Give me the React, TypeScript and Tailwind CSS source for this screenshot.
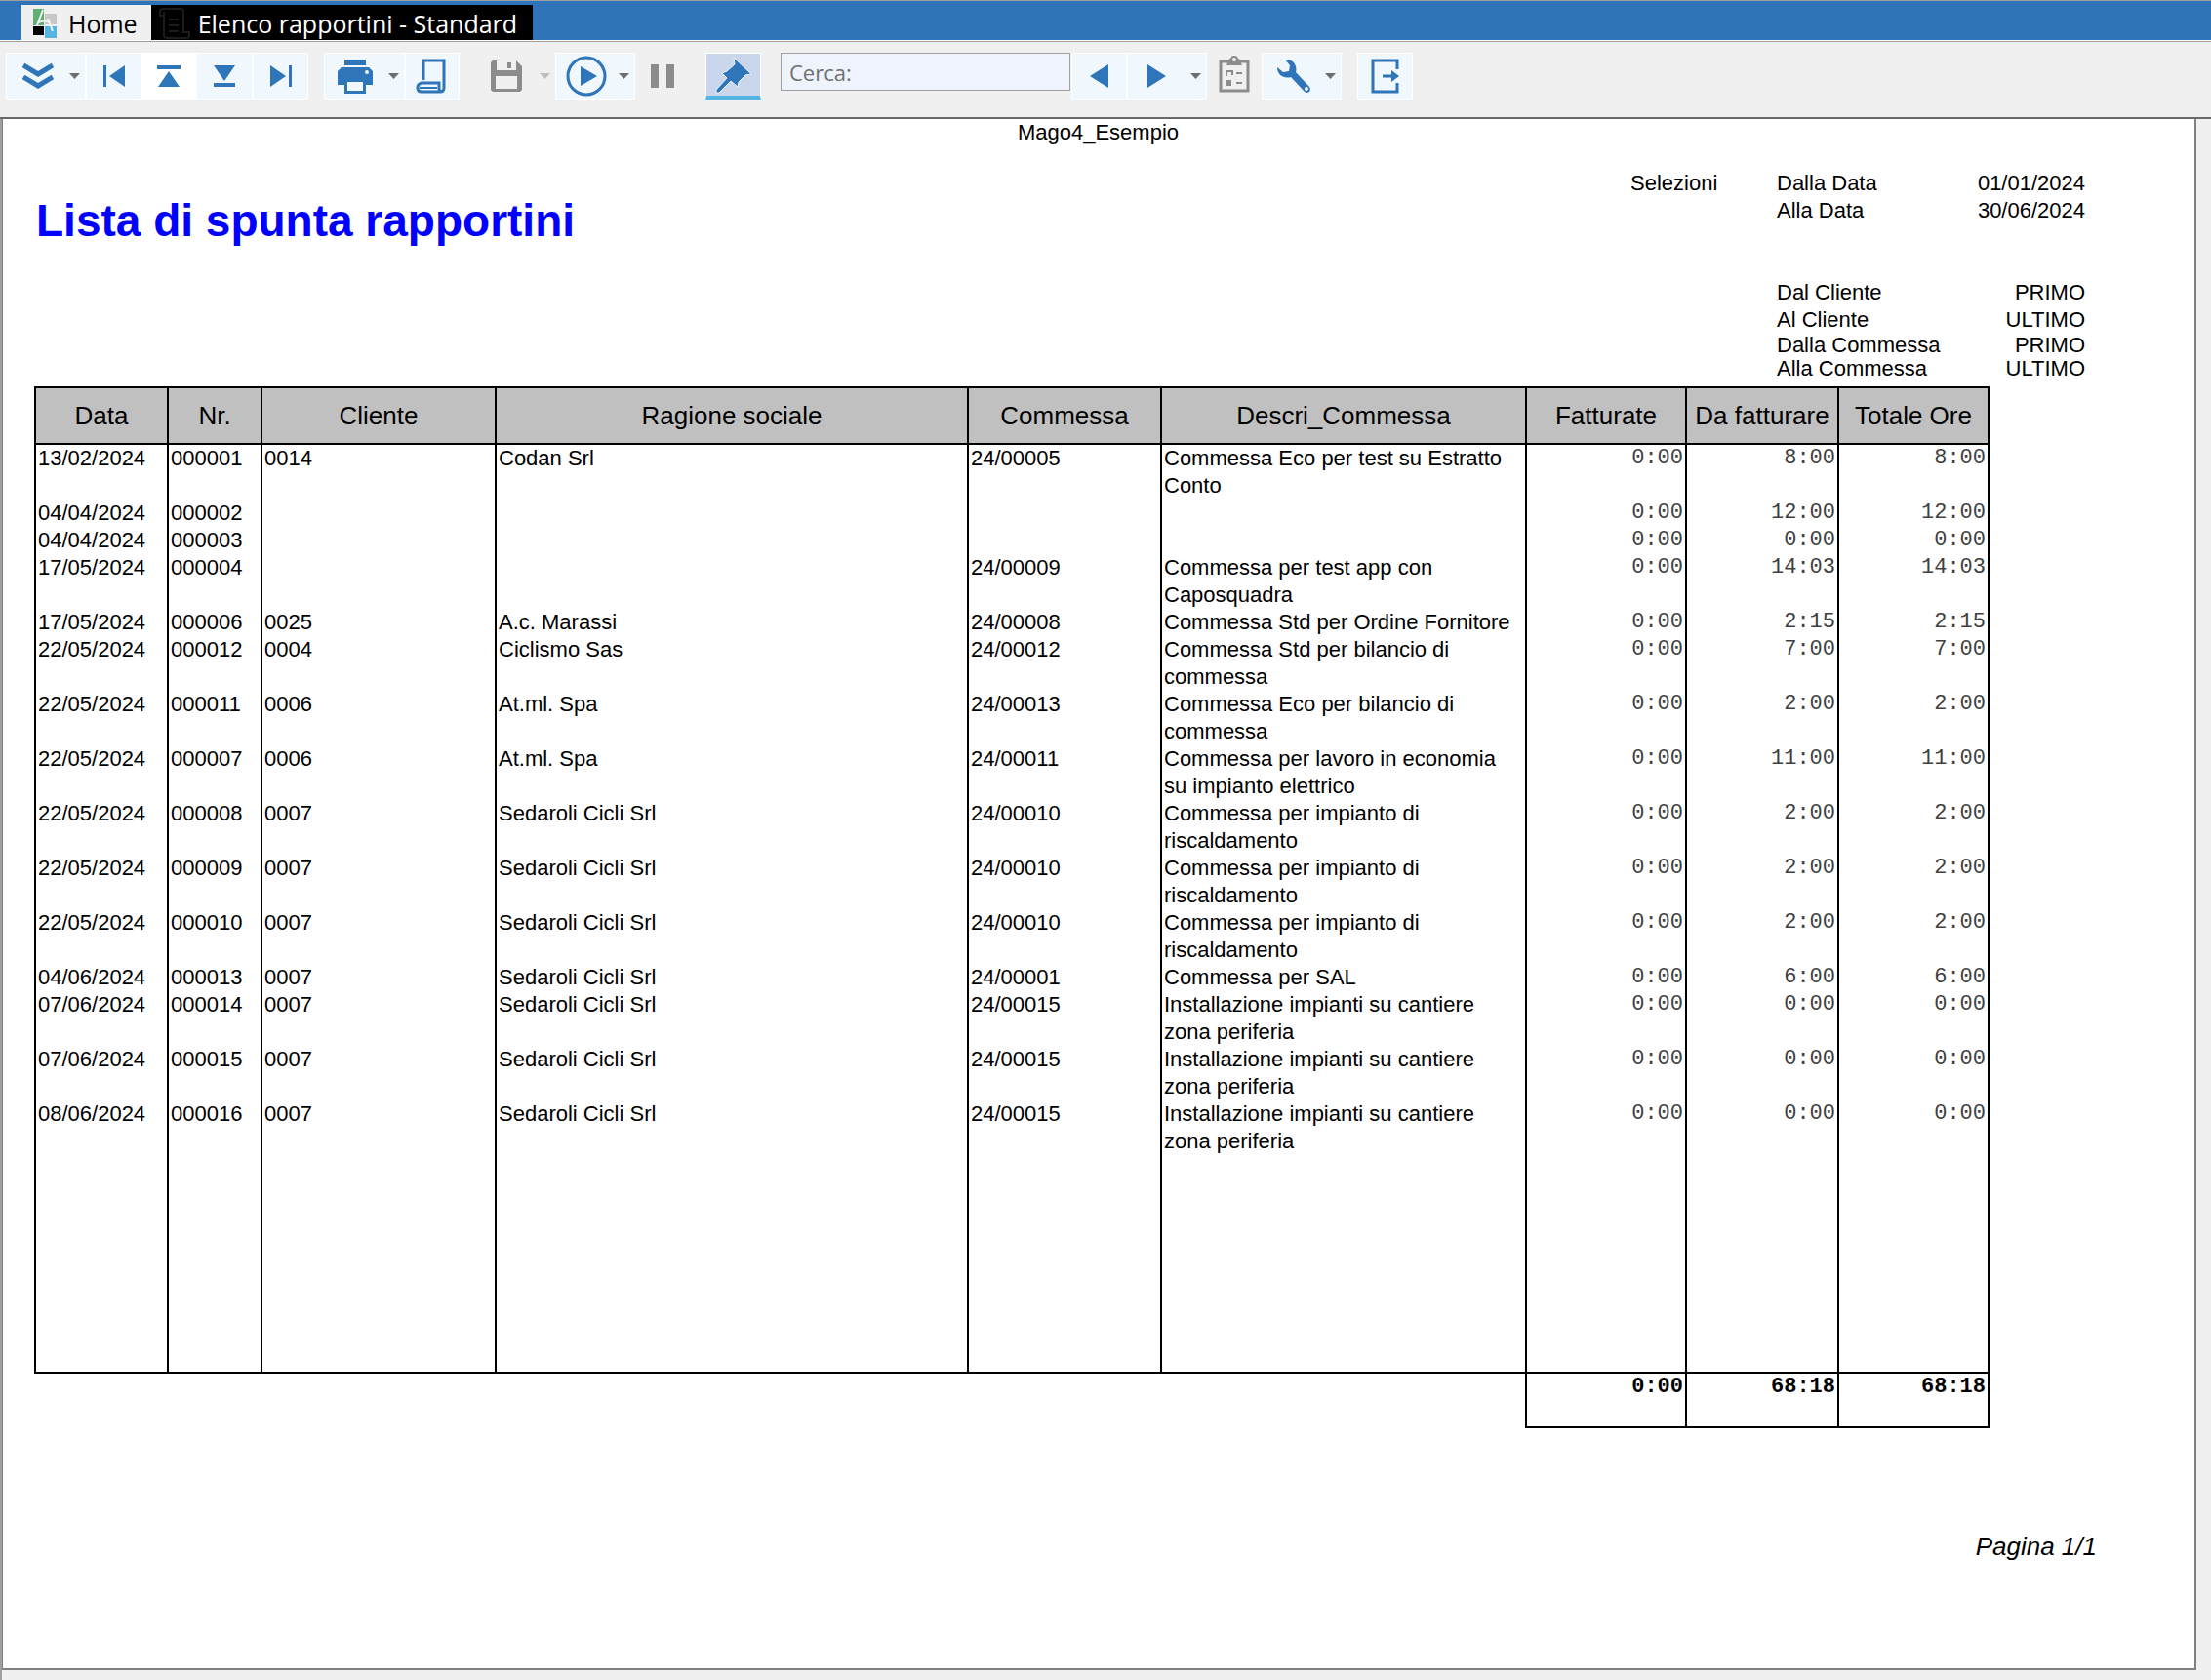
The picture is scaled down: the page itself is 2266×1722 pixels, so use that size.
import type { ReactNode } from 'react';

type Row = {
  data: string;
  nr: string;
  cliente?: string;
  ragione?: string;
  commessa?: string;
  descrizione?: string;
  fatturate: string;
  daFatturare: string;
  totale: string;
};

const columns = [
  { label: 'Data', width: 'w-[136px]' },
  { label: 'Nr.', width: 'w-[96px]' },
  { label: 'Cliente', width: 'w-[240px]' },
  { label: 'Ragione sociale', width: '' },
  { label: 'Commessa', width: 'w-[198px]' },
  { label: 'Descri_Commessa', width: 'w-[374px]' },
  { label: 'Fatturate', width: 'w-[164px]' },
  { label: 'Da fatturare', width: 'w-[156px]' },
  { label: 'Totale Ore', width: 'w-[154px]' },
];

const sedaroli = { cliente: '0007', ragione: 'Sedaroli Cicli Srl' };

const rows: Row[] = [
  { data: '13/02/2024', nr: '000001', cliente: '0014', ragione: 'Codan Srl', commessa: '24/00005', descrizione: 'Commessa Eco per test su Estratto Conto', fatturate: '0:00', daFatturare: '8:00', totale: '8:00' },
  { data: '04/04/2024', nr: '000002', fatturate: '0:00', daFatturare: '12:00', totale: '12:00' },
  { data: '04/04/2024', nr: '000003', fatturate: '0:00', daFatturare: '0:00', totale: '0:00' },
  { data: '17/05/2024', nr: '000004', commessa: '24/00009', descrizione: 'Commessa per test app con Caposquadra', fatturate: '0:00', daFatturare: '14:03', totale: '14:03' },
  { data: '17/05/2024', nr: '000006', cliente: '0025', ragione: 'A.c. Marassi', commessa: '24/00008', descrizione: 'Commessa Std per Ordine Fornitore', fatturate: '0:00', daFatturare: '2:15', totale: '2:15' },
  { data: '22/05/2024', nr: '000012', cliente: '0004', ragione: 'Ciclismo Sas', commessa: '24/00012', descrizione: 'Commessa Std per bilancio di commessa', fatturate: '0:00', daFatturare: '7:00', totale: '7:00' },
  { data: '22/05/2024', nr: '000011', cliente: '0006', ragione: 'At.ml. Spa', commessa: '24/00013', descrizione: 'Commessa Eco per bilancio di commessa', fatturate: '0:00', daFatturare: '2:00', totale: '2:00' },
  { data: '22/05/2024', nr: '000007', cliente: '0006', ragione: 'At.ml. Spa', commessa: '24/00011', descrizione: 'Commessa per lavoro in economia su impianto elettrico', fatturate: '0:00', daFatturare: '11:00', totale: '11:00' },
  { data: '22/05/2024', nr: '000008', ...sedaroli, commessa: '24/00010', descrizione: 'Commessa per impianto di riscaldamento', fatturate: '0:00', daFatturare: '2:00', totale: '2:00' },
  { data: '22/05/2024', nr: '000009', ...sedaroli, commessa: '24/00010', descrizione: 'Commessa per impianto di riscaldamento', fatturate: '0:00', daFatturare: '2:00', totale: '2:00' },
  { data: '22/05/2024', nr: '000010', ...sedaroli, commessa: '24/00010', descrizione: 'Commessa per impianto di riscaldamento', fatturate: '0:00', daFatturare: '2:00', totale: '2:00' },
  { data: '04/06/2024', nr: '000013', ...sedaroli, commessa: '24/00001', descrizione: 'Commessa per SAL', fatturate: '0:00', daFatturare: '6:00', totale: '6:00' },
  { data: '07/06/2024', nr: '000014', ...sedaroli, commessa: '24/00015', descrizione: 'Installazione impianti su cantiere zona periferia', fatturate: '0:00', daFatturare: '0:00', totale: '0:00' },
  { data: '07/06/2024', nr: '000015', ...sedaroli, commessa: '24/00015', descrizione: 'Installazione impianti su cantiere zona periferia', fatturate: '0:00', daFatturare: '0:00', totale: '0:00' },
  { data: '08/06/2024', nr: '000016', ...sedaroli, commessa: '24/00015', descrizione: 'Installazione impianti su cantiere zona periferia', fatturate: '0:00', daFatturare: '0:00', totale: '0:00' },
];

function ToolButton({ label, className, children }: { label: string; className: string; children: ReactNode }) {
  return (
    <button type="button" aria-label={label} className={`flex h-12 shrink-0 items-center border border-white ${className}`}>
      {children}
    </button>
  );
}

function Caret({ className = 'fill-[#6d6d6d]' }: { className?: string }) {
  return (
    <svg width="12" height="6" viewBox="0 0 12 6" className={`shrink-0 ${className}`}>
      <path d="M0 0h11L5.500 6z" />
    </svg>
  );
}

function Toolbar() {
  return (
    <div className="flex h-20 items-start border-t border-b-2 border-t-[#a0a0a0] border-b-[#696969] bg-[#f0f0f0] pt-[11px] pl-1.5 text-[#2e75b9]">
      <ToolButton label="Espandi" className="w-[82px] justify-between bg-[#f0f7fd] pr-1 pl-4">
        <svg width="32" height="30" viewBox="0 0 32 30" fill="none" stroke="currentColor" strokeWidth="5">
          <path d="M1 4l15 9 15-9M1 16l15 9 15-9" />
        </svg>
        <Caret />
      </ToolButton>
      <ToolButton label="Prima pagina" className="w-[57px] justify-center bg-[#f0f7fd]">
        <svg width="24" height="26" viewBox="0 0 24 26" fill="currentColor">
          <path d="M1 2h3v22H1zM23 2v22L7 13z" />
        </svg>
      </ToolButton>
      <ToolButton label="Pagina precedente" className="w-14 justify-center bg-white">
        <svg width="24" height="26" viewBox="0 0 24 26" fill="currentColor">
          <path d="M0 2h24v4H0zM12 8l11 16H1z" />
        </svg>
      </ToolButton>
      <ToolButton label="Pagina successiva" className="w-[58px] justify-center bg-[#f0f7fd]">
        <svg width="24" height="26" viewBox="0 0 24 26" fill="currentColor">
          <path d="M1 20h22v4H1zM12 18L23 2H1z" />
        </svg>
      </ToolButton>
      <ToolButton label="Ultima pagina" className="w-[57px] justify-center bg-[#f0f7fd]">
        <svg width="24" height="26" viewBox="0 0 24 26" fill="currentColor">
          <path d="M20 2h3v22h-3zM1 2v22l16-11z" />
        </svg>
      </ToolButton>
      <ToolButton label="Stampa" className="ml-4 w-[83px] justify-between bg-[#f0f7fd] pr-1 pl-3">
        <svg width="38" height="36" viewBox="0 0 38 36" fill="currentColor">
          <path d="M8 1h22v6H8z" />
          <path fillRule="evenodd" d="M5 9h28l4 4v14h-7v9H8v-9H1V13zM11 24v9h16v-9zM31 12a2 2 0 100 4 2 2 0 000-4z" />
        </svg>
        <Caret />
      </ToolButton>
      <ToolButton label="Anteprima" className="w-14 bg-[#f0f7fd] pl-2.5">
        <svg width="34" height="36" viewBox="0 0 34 36" fill="none" stroke="currentColor" strokeWidth="3">
          <path d="M8 22V2h21v28q0 4-4 4H6q-4 0-4-4t4-5h18v6q0 3 3 3" />
          <path d="M4 30h18" strokeWidth="2" />
        </svg>
      </ToolButton>
      <button type="button" aria-label="Salva" disabled className="ml-8 flex h-12 w-[62px] shrink-0 items-center justify-between">
        <svg width="32" height="34" viewBox="0 0 32 34">
          <path fill="#8c8c8c" fillRule="evenodd" d="M2 1h4v10h20V1l6 6v24l-2 2H2l-2-2V3zM5 17v13h22V17z" />
          <path fill="#8c8c8c" d="M17 3h4v6h-4z" />
        </svg>
        <Caret className="fill-[#bdbdbd]" />
      </button>
      <ToolButton label="Esegui" className="ml-1 w-[82px] justify-between bg-[#f0f7fd] pr-1 pl-2.5">
        <svg width="42" height="42" viewBox="0 0 42 42">
          <circle cx="21" cy="21" r="19" fill="none" stroke="currentColor" strokeWidth="3" />
          <path d="M15 11v20l17-10z" fill="currentColor" />
        </svg>
        <Caret />
      </ToolButton>
      <button type="button" aria-label="Pausa" disabled className="ml-4 flex h-12 shrink-0 items-center">
        <svg width="24" height="24" viewBox="0 0 24 24" fill="#8c8c8c">
          <path d="M0 0h8v24H0zM16 0h8v24h-8z" />
        </svg>
      </button>
      <ToolButton label="Blocca" className="ml-8 w-[57px] justify-center border-b-4 border-b-[#56b4e0] bg-[#c9d6ec]">
        <svg width="38" height="38" viewBox="0 0 38 38" fill="currentColor" stroke="#f0f5fb" strokeWidth="1">
          <path d="M19 1l18 17-6 1-7 7-1 5-7-6L4 37H1v-3l11-12-5-5 5-2 8-7z" />
        </svg>
      </ToolButton>
      <input
        type="text"
        aria-label="Cerca"
        placeholder="Cerca:"
        className="ml-5 h-[39px] w-[297px] shrink-0 border border-[#a0a0a0] bg-[#eff4fc] px-2 font-['Open_Sans',sans-serif] text-[22px] placeholder:text-[#707070]"
      />
      <ToolButton label="Trova precedente" className="ml-px w-[57px] justify-center bg-[#f0f7fd]">
        <svg width="19" height="24" viewBox="0 0 19 24" fill="currentColor">
          <path d="M19 0v24L0 12z" />
        </svg>
      </ToolButton>
      <ToolButton label="Trova successivo" className="w-[82px] justify-between bg-[#f0f7fd] pr-1 pl-5">
        <svg width="19" height="24" viewBox="0 0 19 24" fill="currentColor">
          <path d="M0 0v24l19-12z" />
        </svg>
        <Caret />
      </ToolButton>
      <button type="button" aria-label="Parametri" disabled className="ml-3 flex h-12 shrink-0 items-start pt-0.5">
        <svg width="32" height="40" viewBox="0 0 32 40" fill="none" stroke="#8c8c8c" strokeWidth="3">
          <path d="M2 7h28v30H2z" />
          <path d="M11 4h10l3 7H8z" fill="#8c8c8c" stroke="none" />
          <circle cx="16" cy="5" r="3" fill="#f0f0f0" strokeWidth="2" />
          <path d="M8 22v-5h6v4M18 19h6M18 29h6" strokeWidth="2" />
          <path d="M7 26h6v6H7z" fill="#8c8c8c" stroke="none" />
        </svg>
      </button>
      <ToolButton label="Strumenti" className="ml-3 w-[82px] justify-between bg-[#f0f7fd] pr-1 pl-3.5">
        <svg width="36" height="36" viewBox="0 0 36 36" fill="currentColor">
          <path fillRule="evenodd" d="M9 1c8-1 13 6 11 13l14 15c3 4-2 8-5 5L15 19C8 21 1 17 1 9l6 5 6-1 1-6zM31 29a2 2 0 100 4 2 2 0 000-4z" />
        </svg>
        <Caret />
      </ToolButton>
      <ToolButton label="Esci" className="ml-4 w-[57px] justify-center bg-[#f0f7fd]">
        <svg width="30" height="36" viewBox="0 0 30 36" fill="none" stroke="currentColor" strokeWidth="3">
          <path d="M27 11V2H2v32h25v-9M12 18h11" />
          <path d="M21 12l8 6-8 6z" fill="currentColor" stroke="none" />
        </svg>
      </ToolButton>
    </div>
  );
}

function Selections() {
  return (
    <div className="flex text-[22px]">
      <div className="w-[150px] leading-7">Selezioni</div>
      <dl className="grid w-[316px] grid-cols-[1fr_auto] leading-7">
        <dt>Dalla Data</dt>
        <dd className="text-right">01/01/2024</dd>
        <dt>Alla Data</dt>
        <dd className="text-right">30/06/2024</dd>
        <dt className="mt-14">Dal Cliente</dt>
        <dd className="mt-14 text-right">PRIMO</dd>
        <dt>Al Cliente</dt>
        <dd className="text-right">ULTIMO</dd>
        <dt className="leading-6">Dalla Commessa</dt>
        <dd className="text-right leading-6">PRIMO</dd>
        <dt className="leading-6">Alla Commessa</dt>
        <dd className="text-right leading-6">ULTIMO</dd>
      </dl>
    </div>
  );
}

function ReportTable() {
  const cell = 'border-x-2 border-black pl-0.5';
  const hours = "border-x-2 border-black pr-0.5 text-right font-['Liberation_Mono',monospace]";

  return (
    <table className="w-full table-fixed border-collapse text-[22px] leading-7">
      <thead>
        <tr className="h-[58px] bg-[#c0c0c0] text-[26px]">
          {columns.map((column) => (
            <th key={column.label} className={`border-2 border-black font-normal whitespace-nowrap ${column.width}`}>
              {column.label}
            </th>
          ))}
        </tr>
      </thead>
      <tbody>
        {rows.map((row) => (
          <tr key={row.nr} className="align-top">
            <td className={cell}>{row.data}</td>
            <td className={cell}>{row.nr}</td>
            <td className={cell}>{row.cliente}</td>
            <td className={cell}>{row.ragione}</td>
            <td className={cell}>{row.commessa}</td>
            <td className={`${cell} pr-3`}>{row.descrizione}</td>
            <td className={`${hours} text-[#404040]`}>{row.fatturate}</td>
            <td className={`${hours} text-[#404040]`}>{row.daFatturare}</td>
            <td className={`${hours} text-[#404040]`}>{row.totale}</td>
          </tr>
        ))}
        {/* blank space down to the end of the body */}
        <tr className="h-[223px]">
          {columns.map((column) => (
            <td key={column.label} className="border-x-2 border-b-2 border-black" />
          ))}
        </tr>
      </tbody>
      <tfoot>
        <tr className="h-14 align-top font-bold">
          <td colSpan={6} />
          <td className={`${hours} border-b-2`}>0:00</td>
          <td className={`${hours} border-b-2`}>68:18</td>
          <td className={`${hours} border-b-2`}>68:18</td>
        </tr>
      </tfoot>
    </table>
  );
}

export default function App() {
  return (
    <div className="flex min-h-screen flex-col bg-[#f0f0f0] font-['Liberation_Sans',Arial,sans-serif] text-black">
      {/* Document tabs */}
      <nav className="flex h-[42px] items-end border-t border-b border-t-[#a0a0a0] border-b-white bg-[#2f74b9] pl-[22px] font-['Open_Sans',sans-serif] text-[25px] leading-8">
        <a href="#home" className="flex h-9 items-center gap-3 bg-[#f0f0f0] pt-0.5 pr-3.5 pl-3">
          <svg width="24" height="31" viewBox="0 0 24 31">
            <path d="M0 0h11v17H0z" fill="#5fae74" />
            <path d="M12 5h12v11H12z" fill="#c8c8c8" />
            <path d="M0 18h11v9H0z" />
            <path d="M12 18h12v12H12z" fill="#56b4e0" />
            <path d="M4 17L10 1M6 14q6-3 10 0M15 10l5 13" fill="none" stroke="#f4f4f4" strokeWidth="2" />
          </svg>
          Home
        </a>
        <a href="#report" className="flex h-9 items-center gap-2 bg-black pt-0.5 pr-4 pl-2 text-white">
          <svg width="32" height="32" viewBox="0 0 32 32" fill="none" stroke="#1c1c1c" strokeWidth="2">
            <path d="M5 8H1V4q0-3 3-3h18q3 0 3 3v21h6v3q0 3-3 3H8q-3 0-3-3V4M10 12h10M10 18h10M10 24h10" />
          </svg>
          Elenco rapportini - Standard
        </a>
      </nav>

      <Toolbar />

      <div className="flex grow flex-col border-l-2 border-[#a0a0a0] pr-[15px]">
        <main className="flex flex-col border-r-2 border-b-2 border-l border-[#808080] bg-white pr-[210px] pl-8">
          <div className="-mr-[177px] text-center text-[22px] leading-7">Mago4_Esempio</div>
          <div className="-mr-[98px] flex justify-between pt-6">
            <h1 className="pt-6 pl-0.5 text-[46px] leading-[56px] font-bold text-[#0000ff]">Lista di spunta rapportini</h1>
            <Selections />
          </div>
          <div className="pt-1.5">
            <ReportTable />
          </div>
          <div className="-mr-[110px] pt-[105px] pb-[109px] text-right text-[26px] leading-8 italic">Pagina 1/1</div>
        </main>
      </div>
    </div>
  );
}
